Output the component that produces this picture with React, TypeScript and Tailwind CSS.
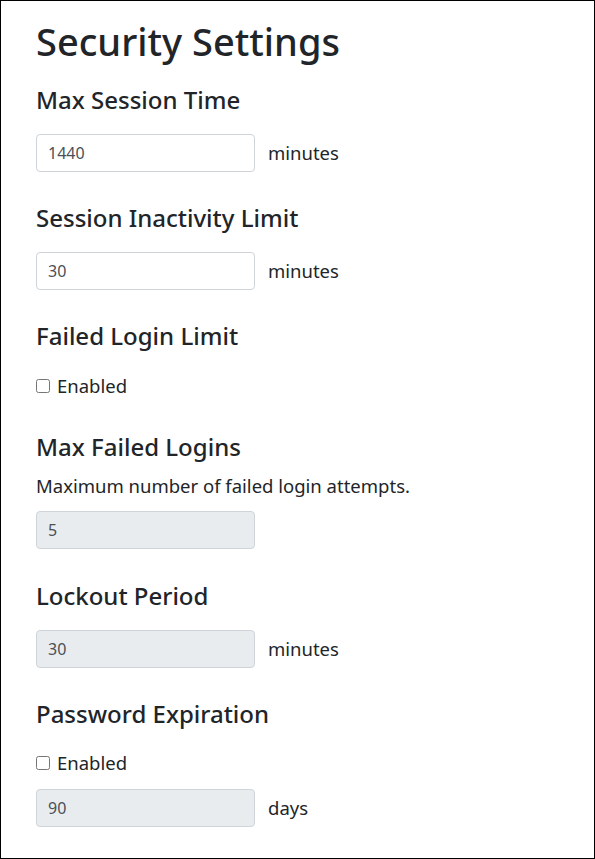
import React from "react";

const font = { fontFamily: '"Noto Sans", "Open Sans", sans-serif' };

function NumberInput({ value, disabled }: { value: string; disabled?: boolean }) {
  return (
    <input
      type="text"
      defaultValue={value}
      disabled={disabled}
      className={
        "w-[219px] h-[38px] px-[11px] rounded-[4px] border border-[#ced4da] text-[16px] text-[#495057] outline-none " +
        (disabled ? "bg-[#e9ecef]" : "bg-white")
      }
    />
  );
}

function Heading({ children }: { children: React.ReactNode }) {
  return <h4 className="text-[24px] leading-[28px] font-medium text-[#212529]">{children}</h4>;
}

function Unit({ children }: { children: React.ReactNode }) {
  return <span className="text-[18.5px] text-[#212529]">{children}</span>;
}

function Check() {
  return (
    <label className="flex items-center gap-[7px] text-[18.5px] text-[#212529] leading-[27px]">
      <input type="checkbox" className="w-[14px] h-[14px] m-0" />
      Enabled
    </label>
  );
}

export default function App() {
  return (
    <div
      style={font}
      className="w-[595px] h-[859px] border border-black bg-white px-[35px] text-[#212529]"
    >
      <h1 className="pt-[17px] text-[38px] leading-[46px] font-medium">Security Settings</h1>

      <div className="mt-[22px]">
        <Heading>Max Session Time</Heading>
        <div className="mt-[20px] flex items-center gap-[13px]">
          <NumberInput value="1440" />
          <Unit>minutes</Unit>
        </div>
      </div>

      <div className="mt-[32px]">
        <Heading>Session Inactivity Limit</Heading>
        <div className="mt-[20px] flex items-center gap-[13px]">
          <NumberInput value="30" />
          <Unit>minutes</Unit>
        </div>
      </div>

      <div className="mt-[32px]">
        <Heading>Failed Login Limit</Heading>
        <div className="mt-[22px]">
          <Check />
        </div>
      </div>

      <div className="mt-[34px]">
        <Heading>Max Failed Logins</Heading>
        <p className="mt-[11px] text-[18.5px] leading-[27px]">Maximum number of failed login attempts.</p>
        <div className="mt-[12px]">
          <NumberInput value="5" disabled />
        </div>
      </div>

      <div className="mt-[33px]">
        <Heading>Lockout Period</Heading>
        <div className="mt-[20px] flex items-center gap-[13px]">
          <NumberInput value="30" disabled />
          <Unit>minutes</Unit>
        </div>
      </div>

      <div className="mt-[32px]">
        <Heading>Password Expiration</Heading>
        <div className="mt-[21px]">
          <Check />
        </div>
        <div className="mt-[13px] flex items-center gap-[13px]">
          <NumberInput value="90" disabled />
          <Unit>days</Unit>
        </div>
      </div>
    </div>
  );
}
